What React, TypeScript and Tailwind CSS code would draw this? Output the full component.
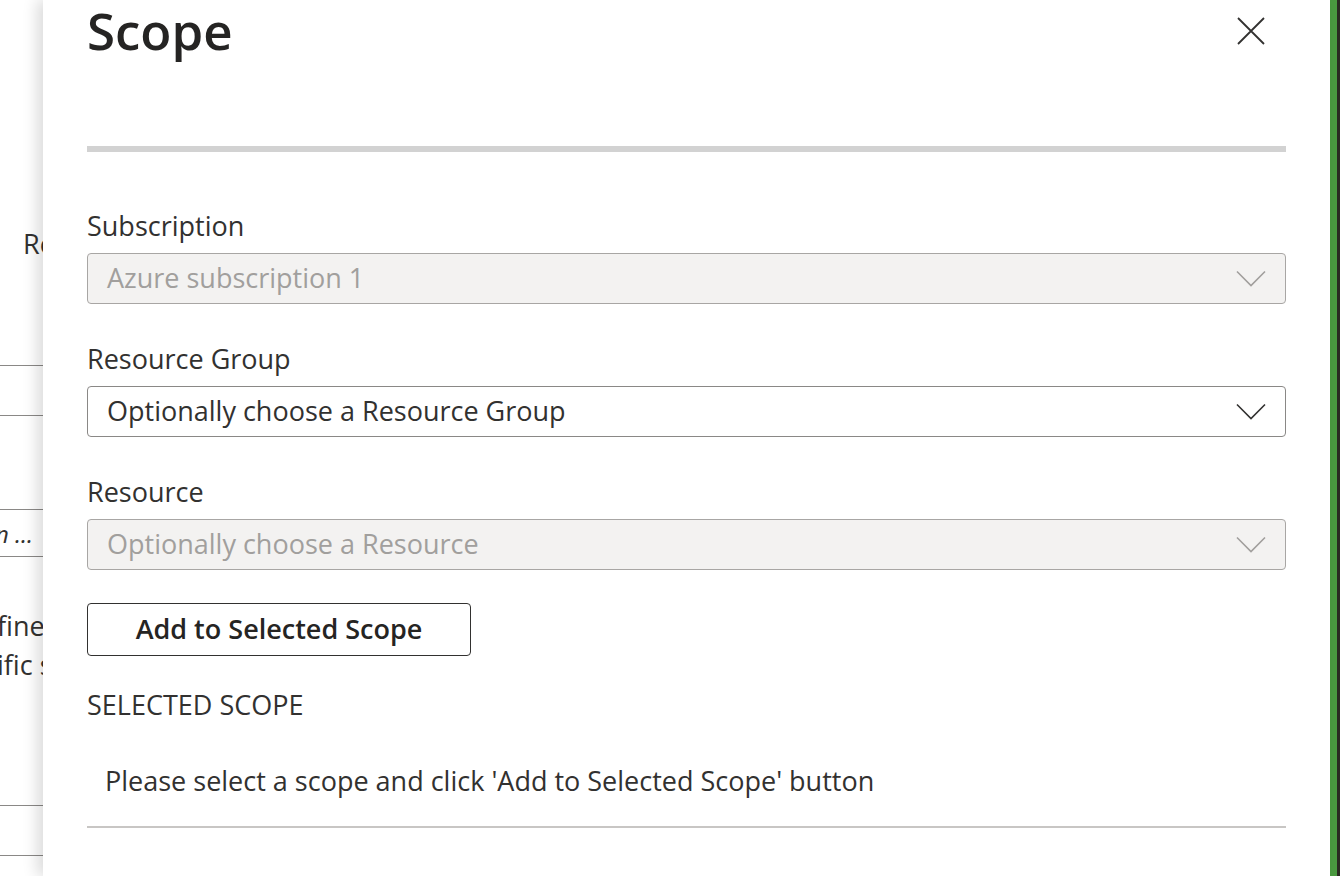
const font = { fontFamily: '"Open Sans", "Noto Sans", sans-serif' };

function Chevron({ muted }: { muted?: boolean }) {
  return (
    <svg width="30" height="18" viewBox="0 0 30 18" fill="none">
      <path
        d="M1 1.5 L15 15.5 L29 1.5"
        stroke={muted ? "#a19f9d" : "#323130"}
        strokeWidth="1.6"
      />
    </svg>
  );
}

function CloseIcon() {
  return (
    <svg width="28" height="28" viewBox="0 0 28 28" fill="none">
      <path d="M1 1 L27 27 M27 1 L1 27" stroke="#323130" strokeWidth="1.8" />
    </svg>
  );
}

interface SelectProps {
  label: string;
  value: string;
  disabled?: boolean;
}

function SelectField({ label, value, disabled }: SelectProps) {
  return (
    <div className="flex flex-col">
      <label className="text-[27px] leading-[36px] text-[#323130] mb-[9px]">{label}</label>
      <div
        className={
          disabled
            ? "h-[51px] flex items-center justify-between pl-[19px] pr-[19px] rounded-[4px] border-[1.5px] border-[#a8a6a4] bg-[#f3f2f1]"
            : "h-[51px] flex items-center justify-between pl-[19px] pr-[19px] rounded-[4px] border-[1.5px] border-[#8a8886] bg-white"
        }
      >
        <span className={disabled ? "text-[27px] text-[#a19f9d]" : "text-[27px] text-[#323130]"}>{value}</span>
        <Chevron muted={disabled} />
      </div>
    </div>
  );
}

export default function App() {
  return (
    <div className="flex w-[1340px] h-[876px] overflow-hidden bg-white" style={font}>
      {/* page behind the panel */}
      <div className="w-[43px] shrink-0 relative overflow-hidden text-[27px] text-[#323130]">
        <span className="absolute left-[23px] top-[224px] whitespace-nowrap">Re</span>
        <div className="absolute left-0 right-0 top-[365px] h-[1px] bg-[#8a8886]" />
        <div className="absolute left-0 right-0 top-[415px] h-[1px] bg-[#8a8886]" />
        <div className="absolute left-0 right-0 top-[509px] h-[1px] bg-[#8a8886]" />
        <span className="absolute left-[-5px] top-[516px] italic text-[24px] whitespace-nowrap">n ...</span>
        <div className="absolute left-0 right-0 top-[556px] h-[1px] bg-[#8a8886]" />
        <span className="absolute left-[-3px] top-[606px] whitespace-nowrap">fine</span>
        <span className="absolute left-[-3px] top-[645px] whitespace-nowrap">ific s</span>
        <div className="absolute left-0 right-0 top-[805px] h-[1px] bg-[#8a8886]" />
        <div className="absolute left-0 right-0 top-[855px] h-[1px] bg-[#8a8886]" />
      </div>

      {/* scope panel */}
      <div className="w-[1287px] shrink-0 bg-white relative z-10 shadow-[-6px_0_14px_rgba(0,0,0,0.14)] pl-[44px] pr-[44px] flex flex-col">
        <div className="flex items-start justify-between">
          <h1 className="text-[51px] font-semibold leading-[60px] text-[#252423]">Scope</h1>
          <button className="mt-[17px] mr-[21px]">
            <CloseIcon />
          </button>
        </div>

        <div className="mt-[86px] h-[6px] bg-[#d2d2d2]" />

        <div className="mt-[56px] flex flex-col gap-[37px]">
          <SelectField label="Subscription" value="Azure subscription 1" disabled />
          <SelectField label="Resource Group" value="Optionally choose a Resource Group" />
          <SelectField label="Resource" value="Optionally choose a Resource" disabled />
        </div>

        <div className="mt-[33px]">
          <button className="w-[384px] h-[53px] rounded-[4px] border-[1.5px] border-[#323130] text-[27px] font-semibold text-[#252423]">
            Add to Selected Scope
          </button>
        </div>

        <div className="mt-[31px] text-[27px] leading-[36px] text-[#323130]">SELECTED SCOPE</div>
        <div className="mt-[40px] pl-[18px] text-[27px] leading-[36px] text-[#323130]">
          Please select a scope and click 'Add to Selected Scope' button
        </div>
        <div className="mt-[27px] h-[2px] bg-[#c8c6c4]" />
      </div>

      <div className="w-[7px] shrink-0 bg-[#4a9a40]" />
      <div className="w-[3px] shrink-0 bg-[#2a2a22]" />
    </div>
  );
}
